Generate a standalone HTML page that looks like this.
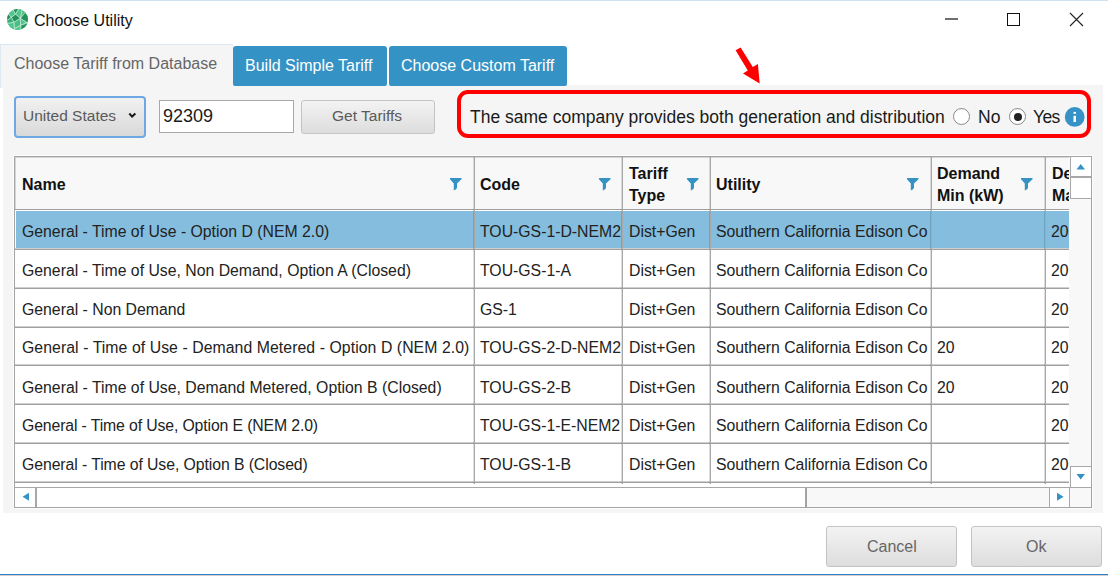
<!DOCTYPE html>
<html><head><meta charset="utf-8">
<style>
*{box-sizing:border-box;margin:0;padding:0}
html,body{width:1108px;height:576px;overflow:hidden;background:#fff;font-family:"Liberation Sans",sans-serif;color:#1e1e1e}
.a{position:absolute;white-space:nowrap}
.t{position:absolute;white-space:nowrap;line-height:1}
#topline{left:0;top:0;width:1108px;height:1px;background:#cfe2f2}
#botline{left:0;top:574px;width:1108px;height:1px;background:#2b7fd0}
#botline2{left:0;top:575px;width:1108px;height:1px;background:#d9cdc4}
.panel{left:3px;top:85px;width:1100px;height:428px;background:#f5f5f5}
.tab1{left:0;top:44px;width:233px;height:44px;background:#f5f5f5;border-top:1px solid #d9e8f3;border-left:1px solid #dde9f3}
.tabb{top:46px;height:40px;background:#3592c4;border-radius:3px 3px 2px 2px}
.btn{border:1px solid #c3c3c3;border-radius:3px;background:linear-gradient(#f3f3f3,#dddddd)}
.th{font-weight:bold;color:#111;font-size:16px}
.td{font-size:15.8px;color:#222}
.hl{background:#c8c8c8}
</style></head><body>
<div class="a" id="topline"></div>
<!-- title bar -->
<svg class="a" style="left:5px;top:7px" width="26" height="26" viewBox="0 0 576 576">
  <defs><clipPath id="cc"><circle cx="278" cy="278" r="232"/></clipPath></defs>
  <g clip-path="url(#cc)" stroke="#e6f5ec" stroke-width="12" stroke-linejoin="round">
    <rect x="0" y="0" width="576" height="576" fill="#52c58c"/>
    <polygon points="150,20 320,10 235,160" fill="#23925c"/>
    <polygon points="0,60 150,20 235,160 140,230 70,150" fill="#52c58c"/>
    <polygon points="320,10 390,40 340,255 235,160" fill="#52c58c"/>
    <polygon points="390,40 560,60 440,130 340,255" fill="#46be84"/>
    <polygon points="440,130 576,150 576,330 480,340 340,255" fill="#23925c"/>
    <polygon points="0,100 70,150 140,230 60,290 0,290" fill="#23925c"/>
    <polygon points="235,160 340,255 195,340 140,230" fill="#23925c"/>
    <polygon points="0,290 60,290 140,230 195,340 80,360 0,360" fill="#35b074"/>
    <polygon points="195,340 340,255 345,410 210,480" fill="#46be84"/>
    <polygon points="0,360 80,360 195,340 210,480 100,576 0,576" fill="#52c58c"/>
    <polygon points="340,255 480,340 345,410" fill="#52c58c"/>
    <polygon points="345,410 480,360 576,420 576,576 360,576" fill="#23925c"/>
    <polygon points="210,480 345,410 360,576 100,576" fill="#52c58c"/>
  </g>
</svg>
<div class="t" style="left:34px;top:13px;font-size:16px;color:#111">Choose Utility</div>
<div class="a" style="left:945px;top:18px;width:13px;height:2px;background:#6e6e6e"></div>
<div class="a" style="left:1007px;top:13px;width:13px;height:13px;border:1px solid #111"></div>
<svg class="a" style="left:1069px;top:12px" width="16" height="16" viewBox="0 0 16 16"><path d="M1,1 L14,14 M14,1 L1,14" stroke="#222" stroke-width="1.1" fill="none"/></svg>

<!-- arrow -->
<svg class="a" style="left:730px;top:42px" width="36" height="46" viewBox="730 42 36 46">
  <polygon points="735.6,50.2 740.6,47.4 752.8,67.1 757.9,64 759.7,83.6 743,73.4 747.8,70.6" fill="#ff0000"/>
</svg>

<!-- tabs -->
<div class="a panel"></div>
<div class="a tab1"></div>
<div class="t" style="left:14px;top:56px;font-size:16px;color:#666">Choose Tariff from Database</div>
<div class="a tabb" style="left:233px;width:154px"></div>
<div class="t" style="left:245px;top:58px;font-size:16px;color:#fff">Build Simple Tariff</div>
<div class="a tabb" style="left:389px;width:178px"></div>
<div class="t" style="left:401px;top:58px;font-size:16px;color:#fff">Choose Custom Tariff</div>

<!-- controls row -->
<div class="a" style="left:14px;top:96px;width:132px;height:42px;border:2px solid #6ea8e4;border-radius:4px;background:linear-gradient(#f1f1f1,#d9d9d9)"></div>
<div class="t" style="left:23px;top:108px;font-size:15.5px;color:#5a5a5a">United States</div>
<svg class="a" style="left:127px;top:112px" width="10" height="8" viewBox="0 0 10 8"><path d="M2.3,1.5 L5.1,4.6 L8.4,1.5" stroke="#1a1a1a" stroke-width="2" fill="none"/></svg>
<div class="a" style="left:159px;top:100px;width:135px;height:33px;background:#fff;border:1px solid #a7a7ad"></div>
<div class="t" style="left:163px;top:107px;font-size:18px;color:#1a1a1a">92309</div>
<div class="a btn" style="left:301px;top:100px;width:134px;height:34px"></div>
<div class="t" style="left:332px;top:108px;font-size:15.5px;color:#5a5a5a">Get Tariffs</div>

<!-- red box -->
<div class="a" style="left:457px;top:90px;width:634px;height:48px;border:4px solid #ff0000;border-radius:11px"></div>
<div class="t" style="left:470px;top:108.6px;font-size:17.5px;color:#1a1a1a">The same company provides both generation and distribution</div>
<div class="a" style="left:953px;top:108px;width:17px;height:17px;border-radius:50%;border:1.5px solid #888;background:#fff"></div>
<div class="t" style="left:978px;top:108.6px;font-size:17.5px;color:#1a1a1a">No</div>
<div class="a" style="left:1009px;top:108px;width:17px;height:17px;border-radius:50%;border:1.5px solid #888;background:#fff"></div>
<div class="a" style="left:1013.5px;top:112.5px;width:8px;height:8px;border-radius:50%;background:#222"></div>
<div class="t" style="left:1033px;top:108.6px;font-size:17.5px;color:#1a1a1a;letter-spacing:-0.6px">Yes</div>
<svg class="a" style="left:1064px;top:106px" width="21" height="21" viewBox="0 0 21 21"><circle cx="10.7" cy="10.9" r="9.9" fill="#3792c7"/><rect x="9.5" y="5.9" width="2.5" height="1.9" fill="#fff"/><rect x="9.5" y="9.8" width="2.5" height="6.2" fill="#fff"/></svg>

<!-- table -->
<div class="a" style="left:14px;top:156px;width:1078px;height:352px;border:1px solid #a4a4a4;background:#fff;box-shadow:0 0 0 1px #fdfdfd"></div>
<div class="a" style="left:15px;top:157px;width:1054px;height:52px;background:#f8f8f8;border-top:1px solid #d6d6d6;border-left:1px solid #d6d6d6"></div>
<div class="a" style="left:15px;top:209px;width:1054px;height:1px;background:#a0a0a0"></div>
<div class="a" style="left:16px;top:211px;width:1053px;height:37px;background:#84bddd"></div>
<div class="a" style="left:15px;top:248px;width:1054px;height:1px;background:#cfcfcf"></div>
<div class="a" style="left:15px;top:249px;width:1054px;height:1px;background:#a0a0a0"></div>
<div class="a" style="left:15px;top:287px;width:1054px;height:1px;background:#cfcfcf"></div>
<div class="a" style="left:15px;top:288px;width:1054px;height:1px;background:#a0a0a0"></div>
<div class="a" style="left:15px;top:326px;width:1054px;height:1px;background:#cfcfcf"></div>
<div class="a" style="left:15px;top:327px;width:1054px;height:1px;background:#a0a0a0"></div>
<div class="a" style="left:15px;top:364px;width:1054px;height:1px;background:#cfcfcf"></div>
<div class="a" style="left:15px;top:365px;width:1054px;height:1px;background:#a0a0a0"></div>
<div class="a" style="left:15px;top:403px;width:1054px;height:1px;background:#cfcfcf"></div>
<div class="a" style="left:15px;top:404px;width:1054px;height:1px;background:#a0a0a0"></div>
<div class="a" style="left:15px;top:442px;width:1054px;height:1px;background:#cfcfcf"></div>
<div class="a" style="left:15px;top:443px;width:1054px;height:1px;background:#a0a0a0"></div>
<div class="a" style="left:15px;top:481px;width:1054px;height:1px;background:#cfcfcf"></div>
<div class="a" style="left:15px;top:482px;width:1054px;height:1px;background:#a0a0a0"></div>
<div class="a" style="left:473px;top:157px;width:1px;height:327px;background:rgba(0,0,0,0.13)"></div>
<div class="a" style="left:474px;top:157px;width:1px;height:327px;background:#a8a8a8"></div>
<div class="a" style="left:621px;top:157px;width:1px;height:327px;background:rgba(0,0,0,0.13)"></div>
<div class="a" style="left:622px;top:157px;width:1px;height:327px;background:#a8a8a8"></div>
<div class="a" style="left:709px;top:157px;width:1px;height:327px;background:rgba(0,0,0,0.13)"></div>
<div class="a" style="left:710px;top:157px;width:1px;height:327px;background:#a8a8a8"></div>
<div class="a" style="left:930px;top:157px;width:1px;height:327px;background:rgba(0,0,0,0.13)"></div>
<div class="a" style="left:931px;top:157px;width:1px;height:327px;background:#a8a8a8"></div>
<div class="a" style="left:1044px;top:157px;width:1px;height:327px;background:rgba(0,0,0,0.13)"></div>
<div class="a" style="left:1045px;top:157px;width:1px;height:327px;background:#a8a8a8"></div>
<div class="t th" style="left:22px;top:177.06px">Name</div>
<div class="t th" style="left:480px;top:177.06px">Code</div>
<div class="t th" style="left:716px;top:177.06px">Utility</div>
<div class="t th" style="left:629px;top:166.26px">Tariff</div>
<div class="t th" style="left:629px;top:188.26px">Type</div>
<div class="t th" style="left:937px;top:166.26px">Demand</div>
<div class="t th" style="left:937px;top:188.26px">Min (kW)</div>
<div class="a" style="left:1046px;top:157px;width:23px;height:327px;overflow:hidden">
<div class="t th" style="left:6px;top:9.259999999999991px">Demand</div>
<div class="t th" style="left:6px;top:31.25999999999999px">Max (kW)</div>
<div class="t td" style="left:5px;top:66.63px">20</div>
<div class="t td" style="left:5px;top:105.63px">20</div>
<div class="t td" style="left:5px;top:144.63px">20</div>
<div class="t td" style="left:5px;top:182.63px">20</div>
<div class="t td" style="left:5px;top:222.63px">20</div>
<div class="t td" style="left:5px;top:260.63px">20</div>
<div class="t td" style="left:5px;top:299.63px">20</div>
</div>
<svg class="a" style="left:449px;top:177px" width="13" height="15" viewBox="0 0 13 15"><path d="M1,1 L12.5,1 L12.5,2.2 L8,6.6 L8,11 Q7,12.8 4.8,13.5 L4.8,6.6 L1,2.2 Z" fill="#3592c4"/></svg>
<svg class="a" style="left:598px;top:177px" width="13" height="15" viewBox="0 0 13 15"><path d="M1,1 L12.5,1 L12.5,2.2 L8,6.6 L8,11 Q7,12.8 4.8,13.5 L4.8,6.6 L1,2.2 Z" fill="#3592c4"/></svg>
<svg class="a" style="left:686px;top:177px" width="13" height="15" viewBox="0 0 13 15"><path d="M1,1 L12.5,1 L12.5,2.2 L8,6.6 L8,11 Q7,12.8 4.8,13.5 L4.8,6.6 L1,2.2 Z" fill="#3592c4"/></svg>
<svg class="a" style="left:906px;top:177px" width="13" height="15" viewBox="0 0 13 15"><path d="M1,1 L12.5,1 L12.5,2.2 L8,6.6 L8,11 Q7,12.8 4.8,13.5 L4.8,6.6 L1,2.2 Z" fill="#3592c4"/></svg>
<svg class="a" style="left:1020px;top:177px" width="13" height="15" viewBox="0 0 13 15"><path d="M1,1 L12.5,1 L12.5,2.2 L8,6.6 L8,11 Q7,12.8 4.8,13.5 L4.8,6.6 L1,2.2 Z" fill="#3592c4"/></svg>
<div class="t td" style="left:22px;top:223.63px">General - Time of Use - Option D (NEM 2.0)</div>
<div class="t td" style="left:480px;top:223.63px">TOU-GS-1-D-NEM2</div>
<div class="t td" style="left:629px;top:223.63px">Dist+Gen</div>
<div class="t td" style="left:716px;top:223.63px;letter-spacing:-0.035px">Southern California Edison Co</div>
<div class="t td" style="left:22px;top:262.63px">General - Time of Use, Non Demand, Option A (Closed)</div>
<div class="t td" style="left:480px;top:262.63px">TOU-GS-1-A</div>
<div class="t td" style="left:629px;top:262.63px">Dist+Gen</div>
<div class="t td" style="left:716px;top:262.63px;letter-spacing:-0.035px">Southern California Edison Co</div>
<div class="t td" style="left:22px;top:301.63px">General - Non Demand</div>
<div class="t td" style="left:480px;top:301.63px">GS-1</div>
<div class="t td" style="left:629px;top:301.63px">Dist+Gen</div>
<div class="t td" style="left:716px;top:301.63px;letter-spacing:-0.035px">Southern California Edison Co</div>
<div class="t td" style="left:22px;top:339.63px;letter-spacing:0.069px">General - Time of Use - Demand Metered - Option D (NEM 2.0)</div>
<div class="t td" style="left:480px;top:339.63px">TOU-GS-2-D-NEM2</div>
<div class="t td" style="left:629px;top:339.63px">Dist+Gen</div>
<div class="t td" style="left:716px;top:339.63px;letter-spacing:-0.035px">Southern California Edison Co</div>
<div class="t td" style="left:937px;top:339.63px">20</div>
<div class="t td" style="left:22px;top:379.63px">General - Time of Use, Demand Metered, Option B (Closed)</div>
<div class="t td" style="left:480px;top:379.63px">TOU-GS-2-B</div>
<div class="t td" style="left:629px;top:379.63px">Dist+Gen</div>
<div class="t td" style="left:716px;top:379.63px;letter-spacing:-0.035px">Southern California Edison Co</div>
<div class="t td" style="left:937px;top:379.63px">20</div>
<div class="t td" style="left:22px;top:417.63px;letter-spacing:-0.125px">General - Time of Use, Option E (NEM 2.0)</div>
<div class="t td" style="left:480px;top:417.63px">TOU-GS-1-E-NEM2</div>
<div class="t td" style="left:629px;top:417.63px">Dist+Gen</div>
<div class="t td" style="left:716px;top:417.63px;letter-spacing:-0.035px">Southern California Edison Co</div>
<div class="t td" style="left:22px;top:456.63px;letter-spacing:-0.077px">General - Time of Use, Option B (Closed)</div>
<div class="t td" style="left:480px;top:456.63px">TOU-GS-1-B</div>
<div class="t td" style="left:629px;top:456.63px">Dist+Gen</div>
<div class="t td" style="left:716px;top:456.63px;letter-spacing:-0.035px">Southern California Edison Co</div>
<div class="a" style="left:1069px;top:157px;width:22px;height:330px;background:#f8f8f8"></div>
<div class="a" style="left:1070px;top:157px;width:21px;height:20px;background:#fff;border:1px solid #a8a8a8;border-top:none;border-right:none"></div>
<svg class="a" style="left:1076px;top:163px" width="10" height="8" viewBox="0 0 10 8"><path d="M0.5,6.5 L4.7,1 L9,6.5 Z" fill="#3592c4"/></svg>
<div class="a" style="left:1070px;top:177px;width:21px;height:22px;background:#fff;border:1px solid #a8a8a8;border-right:none"></div>
<div class="a" style="left:1070px;top:466px;width:21px;height:21px;background:#fff;border:1px solid #a8a8a8;border-right:none;border-bottom:none"></div>
<svg class="a" style="left:1076px;top:473px" width="10" height="8" viewBox="0 0 10 8"><path d="M0.5,1 L4.7,6.5 L9,1 Z" fill="#3592c4"/></svg>
<div class="a" style="left:15px;top:487px;width:1076px;height:20px;background:#f8f8f8;border-top:1px solid #a8a8a8"></div>
<div class="a" style="left:15px;top:487px;width:21px;height:20px;background:#fff;border:1px solid #a8a8a8;border-left:none;border-bottom:none"></div>
<svg class="a" style="left:21px;top:492px" width="10" height="10" viewBox="0 0 10 10"><path d="M8,0.8 L1.5,4.8 L8,8.8 Z" fill="#3592c4"/></svg>
<div class="a" style="left:35px;top:487px;width:772px;height:20px;background:#fff;border:1px solid #a8a8a8;border-left:2px solid #a8a8a8;border-right:2px solid #a4a4a4;border-bottom:none"></div>
<div class="a" style="left:1049px;top:487px;width:21px;height:20px;background:#fff;border:1px solid #a8a8a8;border-bottom:none"></div>
<svg class="a" style="left:1055px;top:492px" width="10" height="10" viewBox="0 0 10 10"><path d="M2,0.8 L8.5,4.8 L2,8.8 Z" fill="#3592c4"/></svg>
<div class="a" style="left:1069px;top:487px;width:22px;height:20px;background:#f8f8f8;border-top:1px solid #a8a8a8;border-left:1px solid #a8a8a8"></div>
<!-- bottom buttons -->
<div class="a btn" style="left:826px;top:526px;width:131px;height:41px"></div>
<div class="t" style="left:867px;top:538.5px;font-size:16px;color:#666">Cancel</div>
<div class="a btn" style="left:971px;top:526px;width:131px;height:41px"></div>
<div class="t" style="left:1026px;top:538.5px;font-size:16px;color:#666">Ok</div>

<div class="a" id="botline"></div>
<div class="a" id="botline2"></div>
</body></html>
